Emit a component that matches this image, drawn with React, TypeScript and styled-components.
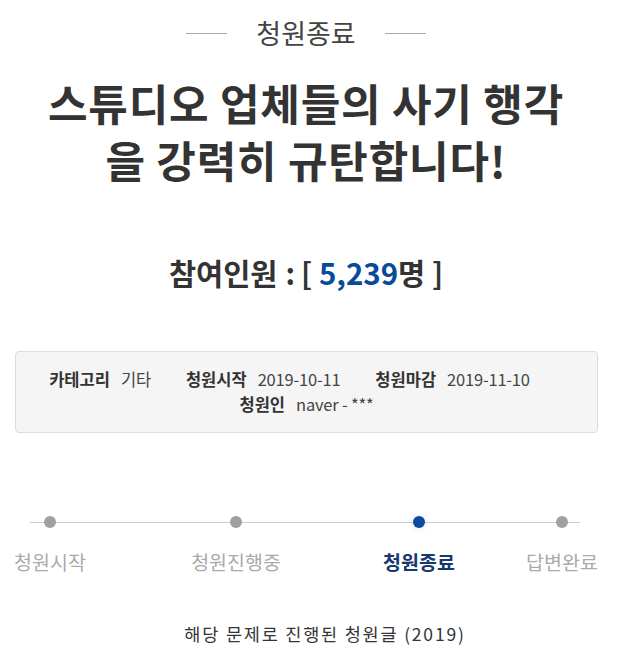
import React from 'react';
import styled, { createGlobalStyle } from 'styled-components';

const GlobalStyle = createGlobalStyle`
  body {
    margin: 0;
    background: #ffffff;
    font-family: "Noto Sans CJK KR", "Noto Sans", sans-serif;
    color: #333333;
  }
`;

const Page = styled.div`
  width: 640px;
  display: flex;
  flex-direction: column;
  align-items: center;
`;

const Panel = styled.div`
  width: 612px;
  align-self: flex-start;
  display: flex;
  flex-direction: column;
  align-items: center;
  padding-top: 15px;
`;

const Status = styled.div`
  display: flex;
  align-items: center;
  gap: 29px;
  font-size: 27px;
  line-height: 36px;
  color: #444444;

  &::before,
  &::after {
    content: '';
    width: 41px;
    height: 1px;
    background: #aaaaaa;
  }
`;

const Title = styled.h1`
  margin: 23px 0 0;
  font-size: 43px;
  line-height: 57px;
  font-weight: 700;
  color: #333333;
  text-align: center;
  letter-spacing: 0.8px;
`;

const Count = styled.div`
  margin-top: 66px;
  font-size: 29.5px;
  line-height: 36px;
  font-weight: 700;
  color: #333333;
`;

const CountSep = styled.span`
  margin: 0 6px 0 8px;
`;

const CountNumber = styled.span`
  color: #0a4a9b;
`;

const InfoBox = styled.div`
  margin-top: 61px;
  width: 583px;
  align-self: flex-start;
  margin-left: 15px;
  box-sizing: border-box;
  padding: 15px 0 15px;
  background: #f5f5f5;
  border: 1px solid #dddddd;
  border-radius: 4px;
  display: flex;
  flex-direction: column;
  align-items: center;
`;

const InfoRow = styled.div<{ $shift?: number }>`
  display: flex;
  gap: 35px;
  line-height: 25px;
  font-size: 16.5px;
  padding-right: ${({ $shift }) => $shift ?? 0}px;
`;

const InfoItem = styled.div`
  display: flex;
  gap: 11px;
`;

const InfoLabel = styled.span`
  font-weight: 700;
  color: #333333;
`;

const InfoValue = styled.span`
  color: #444444;
  letter-spacing: -0.2px;
`;

const Steps = styled.div`
  position: relative;
  margin-top: 83px;
  width: 612px;
  display: flex;

  &::before {
    content: '';
    position: absolute;
    left: 30px;
    width: 550px;
    top: 6px;
    height: 1px;
    background: #cccccc;
  }
`;

const Step = styled.div<{ $left: number }>`
  position: relative;
  width: 100px;
  margin-left: ${({ $left }) => $left}px;
  display: flex;
  flex-direction: column;
  align-items: center;
  gap: 21px;
`;

const Dot = styled.span<{ $active?: boolean }>`
  width: 12px;
  height: 12px;
  border-radius: 50%;
  background: ${({ $active }) => ($active ? '#0b4a9e' : '#a0a0a0')};
  box-shadow: ${({ $active }) => ($active ? '0 0 6px rgba(11, 74, 158, 0.15)' : 'none')};
`;

const StepLabel = styled.span<{ $active?: boolean }>`
  font-size: 19.5px;
  line-height: 26px;
  white-space: nowrap;
  font-weight: ${({ $active }) => ($active ? 700 : 400)};
  color: ${({ $active }) => ($active ? '#173a6e' : '#aaaaaa')};
`;

const Caption = styled.p`
  margin: 48px 0 0 10px;
  font-size: 17.5px;
  line-height: 22px;
  letter-spacing: 1.8px;
  color: #333333;
`;

const info = [
  { label: '카테고리', value: '기타' },
  { label: '청원시작', value: '2019-10-11' },
  { label: '청원마감', value: '2019-11-10' },
];

const steps = [
  { label: '청원시작', left: 0 },
  { label: '청원진행중', left: 86 },
  { label: '청원종료', left: 83, active: true },
  { label: '답변완료', left: 43 },
];

export default function App() {
  return (
    <>
      <GlobalStyle />
      <Page>
        <Panel>
          <Status>청원종료</Status>
          <Title>
            스튜디오 업체들의 사기 행각
            <br />
            을 강력히 규탄합니다!
          </Title>
          <Count>
            참여인원<CountSep>:</CountSep>[ <CountNumber>5,239</CountNumber>명 ]
          </Count>
          <InfoBox>
            <InfoRow $shift={34}>
              {info.map((item) => (
                <InfoItem key={item.label}>
                  <InfoLabel>{item.label}</InfoLabel>
                  <InfoValue>{item.value}</InfoValue>
                </InfoItem>
              ))}
            </InfoRow>
            <InfoRow>
              <InfoItem>
                <InfoLabel>청원인</InfoLabel>
                <InfoValue>naver - ***</InfoValue>
              </InfoItem>
            </InfoRow>
          </InfoBox>
          <Steps>
            {steps.map((step) => (
              <Step key={step.label} $left={step.left}>
                <Dot $active={step.active} />
                <StepLabel $active={step.active}>{step.label}</StepLabel>
              </Step>
            ))}
          </Steps>
        </Panel>
        <Caption>해당 문제로 진행된 청원글 (2019)</Caption>
      </Page>
    </>
  );
}
